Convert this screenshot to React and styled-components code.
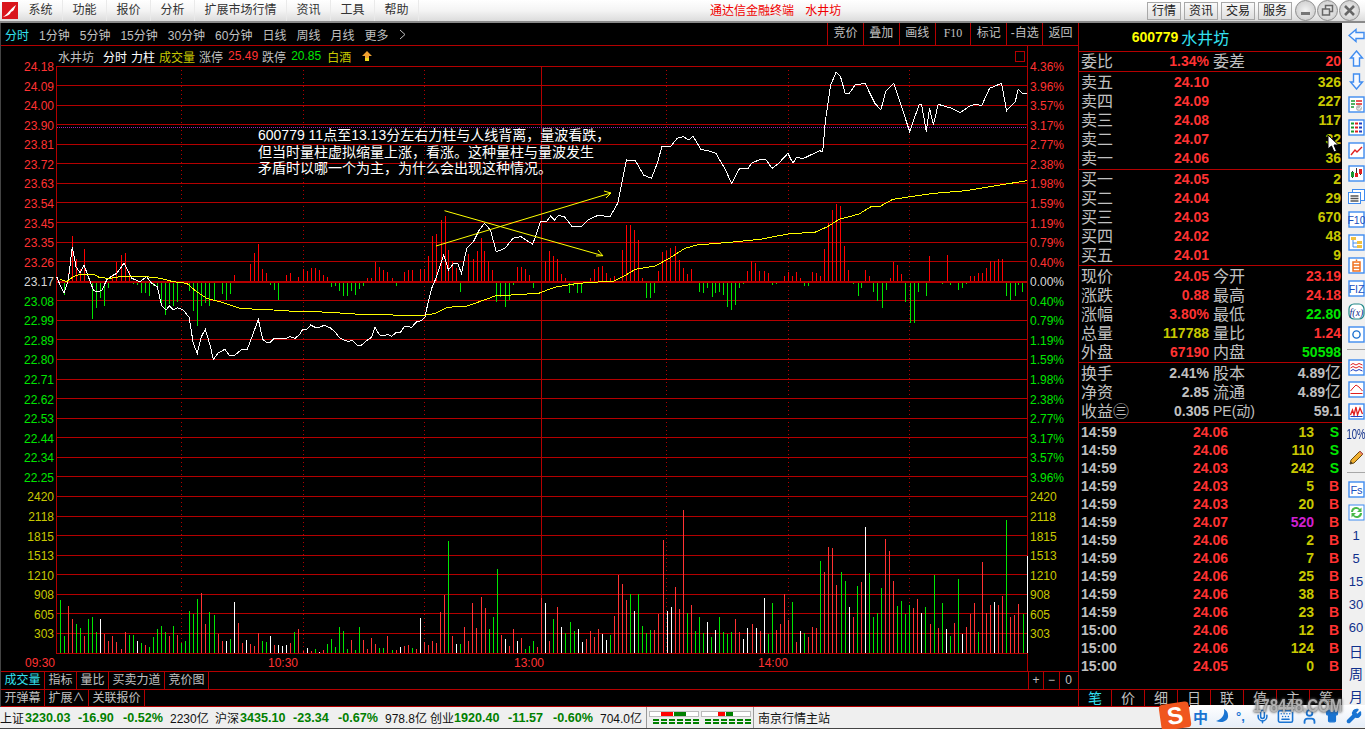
import styled, { createGlobalStyle } from "styled-components";
import { Mic, Keyboard, Wrench, Shirt, User } from "lucide-react";

const LINE = "#b40000";
const RED = "#ff3232";
const GREEN = "#00e600";
const YELLOW = "#c8c800";
const GRAY = "#c0c0c0";
const CYAN = "#33e0f0";

const GlobalStyle = createGlobalStyle`
  html, body {
    margin: 0;
    padding: 0;
    background: #000;
    overflow: hidden;
  }
  * {
    box-sizing: border-box;
  }
`;

const Page = styled.div`
  position: relative;
  width: 1365px;
  height: 729px;
  display: flex;
  flex-direction: column;
  overflow: hidden;
  font-family: "Liberation Sans", "Noto Sans CJK SC", sans-serif;
  font-size: 12px;
  color: ${GRAY};
  background: #000;
`;

/* title bar */
const TitleBar = styled.div`
  height: 23px;
  flex: none;
  display: flex;
  align-items: center;
  padding-left: 2px;
  color: #333;
  background: linear-gradient(#ffffff, #f4f4f4 50%, #dcdcdc);
  border-bottom: 2px solid #8a8a8a;
`;
const Logo = styled.svg`
  width: 16px;
  height: 17px;
  flex: none;
  margin-right: 1px;
`;
const Menu = styled.div`
  padding: 0 9.5px;
  height: 21px;
  line-height: 21px;
  white-space: nowrap;
  border-right: 1px solid #eaeaea;
`;
const AppTitle = styled.div`
  position: absolute;
  left: 710px;
  top: 3px;
  line-height: 17px;
  color: #f00000;
  word-spacing: 8px;
  white-space: nowrap;
`;
const TitleRight = styled.div`
  margin-left: auto;
  display: flex;
  align-items: center;
  padding-right: 5px;
`;
const TitleButton = styled.div`
  width: 34px;
  height: 18px;
  line-height: 17px;
  margin-right: 3px;
  text-align: center;
  color: #222;
  background: linear-gradient(#fafafa, #dedede);
  border: 1px solid #a8a8a8;
`;
const WindowButton = styled.div`
  width: 21px;
  height: 21px;
  margin-left: ${(p) => p.$gap ?? 1}px;
  display: flex;
  align-items: center;
  justify-content: center;
  border-radius: 50%;
  background: radial-gradient(#f4f4f4, #c4c4c4);
  border: 1px solid #8c8c8c;
`;

/* body */
const Body = styled.div`
  flex: none;
  height: 684px;
  display: flex;
`;
const Main = styled.div`
  width: 1079px;
  flex: none;
  display: flex;
  flex-direction: column;
  border-left: 1px solid #444;
  border-right: 1px solid ${LINE};
`;
const TopRow = styled.div`
  height: 23px;
  flex: none;
  display: flex;
  align-items: center;
  padding-left: 4px;
  border-bottom: 1px solid ${LINE};
`;
const Period = styled.span`
  margin-right: ${(p) => p.$gap || 10}px;
  color: ${(p) => p.color || GRAY};
  white-space: nowrap;
`;
const TopButtons = styled.div`
  margin-left: auto;
  height: 100%;
  display: flex;
`;
const TopButton = styled.div`
  width: 35.86px;
  text-align: center;
  line-height: 21px;
  white-space: nowrap;
  border-left: 1px solid ${LINE};
  font-family: ${(p) => (p.$serif ? '"Liberation Serif", serif' : "inherit")};
`;
const ChartHeader = styled.div`
  height: 20px;
  width: 972px;
  flex: none;
  margin-left: 55px;
  padding-left: 2px;
  padding-right: 2px;
  display: flex;
  align-items: center;
  white-space: nowrap;
  border-right: 1px solid ${LINE};
`;
const HeaderText = styled.span`
  margin-right: ${(p) => p.$gap ?? 4}px;
  color: ${(p) => p.color || GRAY};
`;
const SmallBox = styled.div`
  width: 10px;
  height: 11px;
  margin-left: auto;
  border: 1px solid ${LINE};
`;
const ChartRow = styled.div`
  height: 588px;
  flex: none;
  display: flex;
`;
const Axis = styled.div`
  flex: none;
  width: ${(p) => p.$width}px;
  margin-top: -8px;
  padding: ${(p) => (p.$right ? "0 0 0 2px" : "0 2px 0 0")};
  text-align: ${(p) => (p.$right ? "left" : "right")};
`;
const AxisLabel = styled.div`
  height: 19.57px;
  line-height: 19.57px;
  color: ${(p) => p.color};
`;
const Plot = styled.div`
  position: relative;
  width: 972px;
  height: 588px;
  flex: none;
`;
const PlotSvg = styled.svg`
  display: block;
  width: 972px;
  height: 588px;
`;
const Note = styled.div`
  position: absolute;
  left: 202px;
  top: 61px;
  font-size: 14px;
  line-height: 16.5px;
  color: #fff;
  white-space: nowrap;
`;
const TimeRow = styled.div`
  height: 18px;
  flex: none;
  display: flex;
  border-bottom: 1px solid ${LINE};
`;
const TimeLabels = styled.div`
  width: 1027px;
  flex: none;
  display: grid;
  grid-template-columns: 243px 246px 244px 1fr;
  padding-left: 24px;
  line-height: 18px;
  color: ${RED};
  border-right: 1px solid ${LINE};
`;
const TabRow = styled.div`
  height: ${(p) => p.$height}px;
  flex: none;
  display: flex;
  border-bottom: 1px solid ${LINE};
`;
const Tab = styled.div`
  width: ${(p) => p.$width}px;
  flex: none;
  text-align: center;
  line-height: 16px;
  white-space: nowrap;
  color: ${(p) => (p.$active ? CYAN : GRAY)};
  border-right: 1px solid ${LINE};
  margin-left: ${(p) => p.$push || 0}px;
`;
const ZoomButton = styled(Tab)`
  border-left: ${(p) => (p.$first ? `1px solid ${LINE}` : "none")};
  border-right: ${(p) => (p.$last ? "none" : `1px solid ${LINE}`)};
`;

/* quote panel */
const Panel = styled.div`
  width: 263px;
  flex: none;
  display: flex;
  flex-direction: column;
`;
const PanelTitle = styled.div`
  height: 29px;
  flex: none;
  display: flex;
  align-items: center;
  justify-content: center;
  padding-right: 60px;
  font-size: 14px;
  font-weight: 700;
  color: #ffff00;
  border-bottom: 1px solid ${LINE};
`;
const StockName = styled.span`
  margin-left: 3px;
  font-size: 16px;
  font-weight: 400;
  color: ${CYAN};
`;
const Group = styled.div`
  flex: none;
  padding-top: ${(p) => p.$top || 0}px;
  padding-bottom: ${(p) => p.$pad || 0}px;
  border-bottom: 1px solid ${LINE};
`;
const QuoteRow = styled.div`
  height: ${(p) => p.$height || 19}px;
  display: grid;
  grid-template-columns: 32px 96px 4px 32px 96px;
  padding-left: 2px;
  align-items: center;
  line-height: ${(p) => p.$height || 19}px;
`;
const Name = styled.span`
  font-size: ${(p) => p.$size || 16}px;
  color: ${GRAY};
  white-space: nowrap;
`;
const Num = styled.span`
  grid-column: ${(p) => p.$col || "auto"};
  text-align: right;
  font-size: 14px;
  font-weight: 700;
  white-space: nowrap;
  color: ${(p) => p.color || GRAY};
`;
const Unit = styled.span`
  font-size: 16px;
  font-weight: 400;
`;
const TickRow = styled.div`
  height: 18px;
  display: grid;
  grid-template-columns: 38px 109px 86px 25px;
  padding-left: 2px;
  line-height: 18px;
  font-size: 14px;
  font-weight: 700;
`;
const TickCell = styled.span`
  text-align: ${(p) => (p.$left ? "left" : "right")};
  color: ${(p) => p.color || GRAY};
`;
const PanelTabs = styled.div`
  margin-top: auto;
  height: 18px;
  flex: none;
  display: grid;
  grid-template-columns: repeat(8, 33px);
  border-top: 1px solid ${LINE};
  border-bottom: 1px solid ${LINE};
`;
const PanelTab = styled.div`
  text-align: center;
  font-size: 14px;
  line-height: 16px;
  color: ${(p) => (p.$active ? CYAN : GRAY)};
  border-right: 1px solid ${LINE};
`;

/* right tool strip */
const Tools = styled.div`
  flex: 1;
  display: flex;
  flex-direction: column;
  align-items: center;
  padding-top: 1px;
  background: #f0f0f0;
  color: #10308c;
`;
const ToolSlot = styled.div`
  height: ${(p) => p.$height || 23}px;
  flex: none;
  display: flex;
  align-items: center;
  justify-content: center;
  font-size: ${(p) => p.$size || 13}px;
`;
const ToolSvg = styled.svg`
  width: 17px;
  height: 17px;
  display: block;
`;
const Percent = styled.span`
  display: block;
  font-size: 14px;
  transform: scaleX(0.68);
  white-space: nowrap;
`;
const Divider = styled.div`
  width: 19px;
  height: 1px;
  flex: none;
  margin: ${(p) => p.$margin};
  background: #a8a8a8;
`;

/* status bar */
const StatusBar = styled.div`
  height: 22px;
  flex: none;
  display: flex;
  align-items: center;
  color: #111;
  background: #efefef;
  border-bottom: 1px solid #444;
  white-space: nowrap;
`;
const Index = styled.span`
  width: ${(p) => p.$width}px;
  flex: none;
`;
const Green = styled.span`
  flex: none;
  width: ${(p) => p.$width}px;
  font-size: 12.6px;
  font-weight: 700;
  color: #008000;
`;
const Mini = styled.div`
  width: 108px;
  height: 100%;
  flex: none;
  margin-left: 2px;
  padding: 4px 2px 0;
  display: flex;
  gap: 2px;
  border-left: 1px solid #999;
  border-right: 1px solid #999;
`;
const MiniGroup = styled.div`
  width: 50px;
`;
const MiniTrack = styled.div`
  height: 6px;
  display: flex;
  justify-content: center;
  background: #fff;
  border: 1px solid #bbb;
`;
const MiniPart = styled.div`
  height: 100%;
  margin-right: 1px;
  background: ${(p) => p.color};
`;
const MiniDash = styled.div`
  height: 5px;
  margin: 2px 0 0 4px;
  border-top: 2px solid #008000;
  border-bottom: 2px solid #008000;
  mask-image: repeating-linear-gradient(90deg, #000 0 6px, transparent 6px 8px);
`;
const Station = styled.span`
  margin-left: 4px;
`;

/* things lying over the page */
const Ime = styled.div`
  position: absolute;
  right: 0;
  bottom: 2px;
  width: 175px;
  height: 22px;
  padding-left: 3px;
  display: flex;
  align-items: center;
  gap: 7px;
  background: linear-gradient(#ffffff, #e6eef8);
  color: #1a74d2;
`;
const ImeLogo = styled.div`
  position: absolute;
  right: 175px;
  bottom: 0;
  width: 30px;
  height: 26px;
  transform: rotate(-8deg);
  border-radius: 4px;
  background: #f0561e;
  color: #fff;
  font: 700 24px/26px "Liberation Sans", sans-serif;
  text-align: center;
`;
const ImeZh = styled.span`
  font-size: 15px;
  font-weight: 700;
`;
const ImeMark = styled.span`
  font-size: 13px;
  font-weight: 700;
  width: 12px;
`;
const Watermark = styled.div`
  position: absolute;
  left: 1253px;
  top: 695px;
  font-size: 15px;
  font-weight: 700;
  line-height: 18px;
  color: rgba(205, 205, 205, 0.75);
  text-shadow: 0 0 3px #555, 0 0 2px #555;
  transform: scaleY(1.2);
  transform-origin: top left;
  white-space: nowrap;
`;
const Cursor = styled.svg`
  position: absolute;
  left: 1327px;
  top: 134px;
  width: 13px;
  height: 19px;
`;

const gridY = (i) => Math.floor(66 + 19.57 * i) + 0.5;
const barX = (i) => Math.floor(60.33 + i * 4.045);
const redL = "24.18 24.09 24.00 23.90 23.81 23.72 23.63 23.54 23.45 23.35 23.26".split(" ");
const greenL = "23.08 22.99 22.89 22.80 22.71 22.62 22.53 22.44 22.34 22.25".split(" ");
const redR = "4.36 3.96 3.57 3.17 2.77 2.38 1.98 1.59 1.19 0.79 0.40".split(" ");
const greenR = "0.40 0.79 1.19 1.59 1.98 2.38 2.77 3.17 3.57 3.96".split(" ");
const vols = "2420 2118 1815 1513 1210 908 605 303".split(" ");

// volume bars: colour + pixel height, left half then right half of the chart
const VOL = (
  "g53 g17 r47 r34 g29 g25 r17 g34 g36 g21 w34 r19 r12 r17 r11 r4 r21 g18 g18 w12 g10 r8 g6 g16 g24 g27 g21 r17 g27 r18 g10 g12 g42 g39 g54 r60 r29 g41 g38 r19 r12 w12 g14 w51 r30 r10 w13 r9 r7 r20 g12 g11 w17 r8 w8 w7 w8 r10 g21 r24 r2 w5 r2 g4 w1 r3 g9 g14 g6 g26 g22 g4 r13 g3 g26 r13 r4 r15 r9 g5 g5 r17 g3 r3 w6 r7 r8 g5 r4 w35 r11 r8 r12 r10 r41 r58 g112 r17 w9 g9 r26 r12 r50 r25 r56 r45 g24 g36 g84 r18 w14 r7 r24 w12 " +
  "r15 g4 g7 g12 r6 r55 w50 r12 g34 r46 w26 g20 g31 g22 w24 w11 r14 r22 r16 r24 w19 w13 g18 r37 r78 r69 r53 g59 w42 g59 g27 g20 g23 r23 r39 r113 w42 w46 r66 r44 r143 g40 r48 g22 g36 g20 w31 g16 w23 g36 g21 g19 g21 r34 r21 w14 w25 r29 w25 r22 w55 g19 g50 r23 r29 r59 r33 g51 r11 w22 g20 r16 r26 r25 g92 r81 r106 r105 r68 g81 g72 w46 r36 g67 r71 w126 g80 g36 g40 g65 r114 r102 r72 g47 g52 g39 g48 r45 r54 w40 g46 r29 g78 r25 g50 w24 g17 r30 g74 w19 r26 r39 r50 g21 r91 r40 r48 w51 r48 r57 g133 r36 r38 r49 g39 w97"
).split(" ");
const VOL_COLOR = { r: RED, g: GREEN, w: "#ffffff" };

// force bars left of x=420: one value per minute, red above zero and green below
const FORCE_A = [0, -12, 8, 45, 22, 12, 32, 0, -36, -25, -15, -23, -5, 6, 19, 26, 28, 10, -1, -2, -10, -10, -13, -3, -5, -20, -32, -21, -23, -19, 0, -1, -8, -28, -43, -23, -20, -23, -17, 0, -11, -17, -11, 6, 0, 0, 0, 17, 28, 37, 12, 8, -2, -7, -17, 0, 6, 8, 0, 4, 12, 10, 13, 13, 11, 6, 4, -4, -3, -8, -13, -13, -8, -12, -6, -3, 3, 3, 19, 14, 11, 9, 3, -3, 0, 9, 11, 11];
// right of x=420: [crop x, value] read from the zoomed chart
const FORCE_B = [[0,12],[10,12],[21,25],[31,45],[41,47],[52,61],[62,65],[72,31],[82,20],[92,13],[102,-9],[122,27],[133,22],[143,30],[153,43],[163,30],[173,20],[183,11],[193,-19],[203,-14],[214,-24],[224,-17],[235,-2],[245,14],[255,14],[266,12],[276,6],[286,-5],[316,20],[326,30],[337,25],[347,22],[357,7],[367,3],[377,-10],[387,-3],[397,-10],[407,-10],[431,3],[441,12],[451,14],[461,15],[471,8],[481,3],[491,5],[511,31],[521,56],[531,56],[541,51],[551,41],[561,3],[572,-15],[582,-15],[592,-10],[602,10],[612,29],[622,30],[632,33],[645,35],[655,21],[665,13],[675,7],[685,12],[706,-9],[716,-10],[726,-5],[737,-14],[747,-10],[757,-9],[767,-12],[777,-24],[787,-27],[797,-22],[807,-5],[817,-1],[827,10],[837,20],[848,18],[858,10],[870,10],[880,8],[890,-2],[900,-1],[921,5],[931,9],[941,5],[951,9],[961,3],[971,-3],[981,-3],[991,9],[1001,8],[1012,5],[1022,32],[1032,58],[1042,71],[1052,77],[1062,75],[1073,35],[1083,11],[1095,-1],[1106,-13],[1116,-5],[1126,11],[1136,5],[1146,-9],[1156,-18],[1167,-25],[1177,-7],[1187,3],[1197,19],[1207,16],[1217,7],[1227,-19],[1238,-40],[1248,-40],[1258,-9],[1278,-13],[1288,25],[1320,-1],[1331,26],[1341,-2],[1361,-7],[1371,-5],[1381,-1],[1391,5],[1401,5],[1411,8],[1421,8],[1431,13],[1442,20],[1452,20],[1462,22],[1472,22],[1482,-13],[1492,-17],[1503,-13],[1513,-2],[1523,-9]];

const mapA = ([x, y]) => [40 + x / 3, 230 + y / 3];
const mapB = ([x, y]) => [420 + x / 2.528, 60 + y / 3];
const toPoints = (list) => list.map((p) => `${p[0].toFixed(1)},${p[1].toFixed(1)}`).join(" ");

const PRICE = toPoints([
  ...[[50,140],[60,165],[72,190],[85,150],[97,50],[108,110],[120,128],[132,105],[145,140],[160,180],[170,185],[185,182],[200,150],[215,138],[230,130],[252,100],[265,125],[275,145],[300,155],[320,140],[335,160],[352,170],[365,228],[378,240],[388,228],[400,240],[412,233],[430,240],[447,262],[460,340],[472,370],[484,320],[496,298],[510,345],[520,388],[535,368],[555,358],[568,376],[585,375],[605,358],[622,358],[640,310],[655,268],[668,328],[680,338],[690,338],[702,325],[740,325],[750,320],[765,325],[778,315],[788,298],[800,298],[812,285],[825,292],[840,291],[853,286],[870,293],[885,305],[900,325],[925,335],[935,330],[955,348],[965,345],[985,328],[995,322],[1005,292],[1018,314],[1030,318],[1042,313],[1055,319],[1068,308],[1080,308],[1095,288],[1115,292],[1130,275],[1145,272],[1155,260],[1165,215],[1175,175],[1188,145]].map(mapA),
  ...[[50,620],[60,585],[72,630],[85,610],[95,610],[105,640],[118,565],[135,545],[150,510],[163,490],[178,510],[193,575],[215,565],[235,535],[255,530],[285,553],[305,485],[320,485],[330,468],[340,480],[350,466],[365,470],[385,500],[408,500],[425,480],[450,466],[480,470],[500,430],[510,370],[522,300],[545,303],[565,345],[585,355],[600,310],[612,258],[635,258],[650,235],[665,230],[680,240],[690,228],[710,268],[730,273],[748,280],[770,325],[788,370],[808,325],[830,325],[838,310],[860,298],[875,300],[890,325],[905,312],[930,280],[943,310],[952,292],[968,296],[1010,272],[1018,275],[1025,180],[1038,75],[1052,37],[1063,50],[1075,100],[1085,100],[1100,75],[1115,72],[1125,70],[1150,130],[1165,150],[1178,92],[1198,70],[1238,215],[1262,133],[1268,133],[1280,215],[1288,145],[1298,195],[1310,133],[1330,140],[1345,145],[1365,158],[1390,138],[1405,133],[1420,137],[1440,85],[1470,70],[1483,152],[1505,125],[1512,88],[1522,100],[1534,100]].map(mapB),
]);
const AVERAGE = toPoints([
  ...[[60,148],[80,155],[100,140],[120,133],[160,133],[180,143],[210,145],[240,140],[320,140],[360,145],[400,155],[440,160],[470,185],[500,205],[540,215],[600,235],[650,238],[700,240],[760,244],[830,245],[900,249],[960,253],[1030,253],[1090,257],[1140,257]].map(mapA),
  ...[[0,768],[40,760],[70,742],[120,738],[190,708],[300,700],[340,682],[400,670],[490,663],[520,645],[545,628],[595,618],[630,595],[670,565],[700,555],[800,545],[860,538],[930,522],[1000,516],[1030,500],[1060,478],[1110,462],[1140,440],[1165,438],[1195,418],[1240,410],[1300,400],[1380,392],[1440,380],[1534,362]].map(mapB),
]);

const MENU = ["系统", "功能", "报价", "分析", "扩展市场行情", "资讯", "工具", "帮助"];
const PERIODS = ["1分钟", "5分钟", "15分钟", "30分钟", "60分钟", "日线", "周线", "月线", "更多"];
const SELL = [["卖五", "24.10", "326"], ["卖四", "24.09", "227"], ["卖三", "24.08", "117"], ["卖二", "24.07", "32"], ["卖一", "24.06", "36"]];
const BUY = [["买一", "24.05", "2"], ["买二", "24.04", "29"], ["买三", "24.03", "670"], ["买四", "24.02", "48"], ["买五", "24.01", "9"]];
const STATS = [
  ["现价", "24.05", RED, "今开", "23.19", RED],
  ["涨跌", "0.88", RED, "最高", "24.18", RED],
  ["涨幅", "3.80%", RED, "最低", "22.80", GREEN],
  ["总量", "117788", YELLOW, "量比", "1.24", RED],
  ["外盘", "67190", RED, "内盘", "50598", GREEN],
];
const TICKS = [
  ["14:59", "24.06", "13", "S"], ["14:59", "24.06", "110", "S"], ["14:59", "24.03", "242", "S"], ["14:59", "24.03", "5", "B"],
  ["14:59", "24.03", "20", "B"], ["14:59", "24.07", "520", "B"], ["14:59", "24.06", "2", "B"], ["14:59", "24.06", "7", "B"],
  ["14:59", "24.06", "25", "B"], ["14:59", "24.06", "38", "B"], ["14:59", "24.06", "23", "B"], ["15:00", "24.06", "12", "B"],
  ["15:00", "24.06", "124", "B"], ["15:00", "24.05", "0", "B"],
];
const BLUE = "#3f8cf0";

function Box({ children }) {
  return (
    <ToolSvg viewBox="0 0 17 17">
      <rect x="1" y="1" width="15" height="15" fill="#fff" stroke={BLUE} strokeWidth="1.4" />
      {children}
    </ToolSvg>
  );
}

function Chart() {
  return (
    <PlotSvg viewBox="56 66 972 588" shapeRendering="crispEdges">
      {Array.from({ length: 31 }, (_, i) => (
        <line key={i} x1="57" x2="1027" y1={gridY(i)} y2={gridY(i)} stroke={LINE} />
      ))}
      <line x1="56.5" x2="56.5" y1="66" y2="654" stroke={LINE} />
      <line x1="1027.5" x2="1027.5" y1="66" y2="654" stroke={LINE} />
      <line x1="541.5" x2="541.5" y1="66" y2="654" stroke={LINE} />
      {[181, 303, 424, 666, 788, 909].map((x) => (
        <line key={x} x1={x + 0.5} x2={x + 0.5} y1="66" y2="654" stroke={LINE} strokeDasharray="1 3" />
      ))}
      <line x1="57" x2="1027" y1="127.5" y2="127.5" stroke="#a020b0" strokeDasharray="1 1" />
      <rect x="57" y="281" width="970" height="2" fill="#b80000" />
      {FORCE_A.map((v, i) =>
        v ? (
          <rect key={i} x={barX(i)} y={v > 0 ? 281 - v : 283} width="1" height={Math.abs(v)} fill={v > 0 ? "#ff0000" : GREEN} />
        ) : null
      )}
      {FORCE_B.map(([z, v]) => (
        <rect key={z} x={Math.round(420 + z / 2.528)} y={v > 0 ? 281 - v : 283} width="1" height={Math.abs(v)} fill={v > 0 ? "#ff0000" : GREEN} />
      ))}
      {VOL.map((bar, i) => {
        const h = Number(bar.slice(1));
        return <rect key={i} x={barX(i)} y={653 - h} width="1" height={h} fill={VOL_COLOR[bar[0]]} />;
      })}
      <polyline points={PRICE} fill="none" stroke="#fff" />
      <polyline points={AVERAGE} fill="none" stroke="#ffff00" />
      <g fill="none" stroke="#ffff00" shapeRendering="auto">
        <path d="M436 246 L611 193 M604 191 L611 193 L606 198" />
        <path d="M444.5 210.7 L602.8 255.7 M598 250 L602.8 255.7 L596 256" />
      </g>
    </PlotSvg>
  );
}

export default function App() {
  return (
    <Page>
      <GlobalStyle />
      <TitleBar>
        <Logo viewBox="0 0 16 17">
          <rect width="16" height="17" fill="#d9161c" />
          <path d="M1 15 C6 12 7 8 14 3 C12 7 12 9 9 10 C8 13 5 14 1 15 Z" fill="#fff" />
        </Logo>
        {MENU.map((m) => (
          <Menu key={m}>{m}</Menu>
        ))}
        <AppTitle>通达信金融终端 水井坊</AppTitle>
        <TitleRight>
          {["行情", "资讯", "交易", "服务"].map((t) => (
            <TitleButton key={t}>{t}</TitleButton>
          ))}
          <WindowButton $gap={0}>
            <svg width="13" height="13" viewBox="0 0 13 13">
              <rect x="2" y="8" width="9" height="3" fill="#777" />
            </svg>
          </WindowButton>
          <WindowButton>
            <svg width="13" height="13" viewBox="0 0 13 13" fill="none" stroke="#666" strokeWidth="1.5">
              <rect x="4.5" y="1.5" width="7" height="6" />
              <rect x="1.5" y="5" width="7" height="6" fill="#ddd" />
            </svg>
          </WindowButton>
          <WindowButton>
            <svg width="13" height="13" viewBox="0 0 13 13" stroke="#666" strokeWidth="2.6">
              <path d="M2 2 L11 11 M11 2 L2 11" />
            </svg>
          </WindowButton>
        </TitleRight>
      </TitleBar>

      <Body>
        <Main>
          <TopRow>
            <Period color={CYAN}>分时</Period>
            {PERIODS.map((p) => (
              <Period key={p}>{p}</Period>
            ))}
            <svg width="7" height="11" viewBox="0 0 7 11" fill="none" stroke={GRAY}>
              <path d="M1 1 L6 5.5 L1 10" />
            </svg>
            <TopButtons>
              {["竞价", "叠加", "画线", "F10", "标记", "-自选", "返回"].map((b) => (
                <TopButton key={b} $serif={b === "F10"}>
                  {b}
                </TopButton>
              ))}
            </TopButtons>
          </TopRow>
          <ChartHeader>
            <HeaderText $gap={9}>水井坊</HeaderText>
            <HeaderText color="#fff">分时</HeaderText>
            <HeaderText color="#fff">力柱</HeaderText>
            <HeaderText color={YELLOW}>成交量</HeaderText>
            <HeaderText $gap={5}>涨停</HeaderText>
            <HeaderText color={RED}>25.49</HeaderText>
            <HeaderText $gap={5}>跌停</HeaderText>
            <HeaderText color={GREEN} $gap={6}>20.85</HeaderText>
            <HeaderText color={YELLOW} $gap={11}>白酒</HeaderText>
            <svg width="10" height="11" viewBox="0 0 10 11">
              <path d="M5 0 L10 5 H7 V7 H3 V5 H0 Z" fill="#f0a030" />
              <rect x="3" y="7" width="4" height="3" fill="#e8d820" />
            </svg>
            <SmallBox />
          </ChartHeader>
          <ChartRow>
            <Axis $width={55}>
              {redL.map((l) => (
                <AxisLabel key={l} color={RED}>{l}</AxisLabel>
              ))}
              <AxisLabel color="#d8d8d8">23.17</AxisLabel>
              {greenL.map((l) => (
                <AxisLabel key={l} color={GREEN}>{l}</AxisLabel>
              ))}
              {vols.map((l) => (
                <AxisLabel key={l} color={YELLOW}>{l}</AxisLabel>
              ))}
            </Axis>
            <Plot>
              <Chart />
              <Note>
                600779 11点至13.13分左右力柱与人线背离，量波看跌，
                <br />
                但当时量柱虚拟缩量上涨，看涨。这种量柱与量波发生
                <br />
                矛盾时以哪一个为主，为什么会出现这种情况。
              </Note>
            </Plot>
            <Axis $width={50} $right>
              {redR.map((l) => (
                <AxisLabel key={l} color={RED}>{l}%</AxisLabel>
              ))}
              <AxisLabel color="#d8d8d8">0.00%</AxisLabel>
              {greenR.map((l) => (
                <AxisLabel key={l} color={GREEN}>{l}%</AxisLabel>
              ))}
              {vols.map((l) => (
                <AxisLabel key={l} color={YELLOW}>{l}</AxisLabel>
              ))}
            </Axis>
          </ChartRow>
          <TimeRow>
            <TimeLabels>
              <span>09:30</span>
              <span>10:30</span>
              <span>13:00</span>
              <span>14:00</span>
            </TimeLabels>
          </TimeRow>
          <TabRow $height={18}>
            <Tab $width={44} $active>成交量</Tab>
            <Tab $width={32}>指标</Tab>
            <Tab $width={32}>量比</Tab>
            <Tab $width={56}>买卖力道</Tab>
            <Tab $width={44}>竞价图</Tab>
            <ZoomButton $width={16} $push={819} $first>+</ZoomButton>
            <ZoomButton $width={16}>−</ZoomButton>
            <ZoomButton $width={17} $last>0</ZoomButton>
          </TabRow>
          <TabRow $height={17}>
            <Tab $width={44}>开弹幕</Tab>
            <Tab $width={44}>扩展∧</Tab>
            <Tab $width={56}>关联报价</Tab>
          </TabRow>
        </Main>

        <Panel>
          <PanelTitle>
            600779
            <StockName>水井坊</StockName>
          </PanelTitle>
          <Group>
            <QuoteRow>
              <Name>委比</Name>
              <Num color={RED}>1.34%</Num>
              <span />
              <Name>委差</Name>
              <Num color={RED}>20</Num>
            </QuoteRow>
          </Group>
          <Group $top={1} $pad={1}>
            {SELL.map(([n, p, v]) => (
              <QuoteRow key={n}>
                <Name>{n}</Name>
                <Num color={RED}>{p}</Num>
                <Num $col="5" color={YELLOW}>{v}</Num>
              </QuoteRow>
            ))}
          </Group>
          <Group>
            {BUY.map(([n, p, v]) => (
              <QuoteRow key={n}>
                <Name>{n}</Name>
                <Num color={RED}>{p}</Num>
                <Num $col="5" color={YELLOW}>{v}</Num>
              </QuoteRow>
            ))}
          </Group>
          <Group $top={1}>
            {STATS.map(([a, av, ac, b, bv, bc]) => (
              <QuoteRow key={a}>
                <Name>{a}</Name>
                <Num color={ac}>{av}</Num>
                <span />
                <Name>{b}</Name>
                <Num color={bc}>{bv}</Num>
              </QuoteRow>
            ))}
          </Group>
          <Group $pad={1}>
            <QuoteRow $height={19.3}>
              <Name>换手</Name>
              <Num>2.41%</Num>
              <span />
              <Name>股本</Name>
              <Num>4.89<Unit>亿</Unit></Num>
            </QuoteRow>
            <QuoteRow $height={19.3}>
              <Name>净资</Name>
              <Num>2.85</Num>
              <span />
              <Name>流通</Name>
              <Num>4.89<Unit>亿</Unit></Num>
            </QuoteRow>
            <QuoteRow $height={19.3}>
              <Name>收益㊂</Name>
              <Num>0.305</Num>
              <span />
              <Name $size={14}>PE(动)</Name>
              <Num>59.1</Num>
            </QuoteRow>
          </Group>
          {TICKS.map(([t, p, v, f], i) => (
            <TickRow key={i}>
              <TickCell $left>{t}</TickCell>
              <TickCell color={RED}>{p}</TickCell>
              <TickCell color={v === "520" ? "#d020d0" : YELLOW}>{v}</TickCell>
              <TickCell color={f === "S" ? GREEN : RED}>{f}</TickCell>
            </TickRow>
          ))}
          <PanelTabs>
            {["笔", "价", "细", "日", "联", "值", "主", "筹"].map((t, i) => (
              <PanelTab key={t} $active={i === 0}>{t}</PanelTab>
            ))}
          </PanelTabs>
        </Panel>

        <Tools>
          <ToolSlot>
            <svg width="17" height="15" viewBox="0 0 17 15" fill="#f4f8ff" stroke={BLUE} strokeWidth="1.4">
              <path d="M1 7.5 L8 1.5 V4.5 H16 V10.5 H8 V13.5 Z" />
            </svg>
          </ToolSlot>
          <ToolSlot>
            <svg width="15" height="17" viewBox="0 0 15 17" fill="#f4f8ff" stroke={BLUE} strokeWidth="1.4">
              <path d="M7.5 1 L13.5 8 H10.5 V16 H4.5 V8 H1.5 Z" />
            </svg>
          </ToolSlot>
          <ToolSlot>
            <svg width="15" height="17" viewBox="0 0 15 17" fill="#f4f8ff" stroke={BLUE} strokeWidth="1.4">
              <path d="M7.5 16 L13.5 9 H10.5 V1 H4.5 V9 H1.5 Z" />
            </svg>
          </ToolSlot>
          <ToolSlot>
            <Box>
              <path d="M3 5 H7 M3 8 H7 M3 11 H6" stroke="#1a9a30" strokeWidth="1.5" />
              <path d="M8 5 H14 M8 8 H14" stroke="#e02020" strokeWidth="1.5" />
              <circle cx="11" cy="12" r="3" fill="#bbb" />
              <path d="M9.5 12 L11 13.5 L13.5 10" stroke="#fff" fill="none" />
            </Box>
          </ToolSlot>
          <ToolSlot>
            <Box>
              <path d="M3 4.5 H6 M3 8.5 H6 M3 12.5 H6" stroke="#1a9a30" strokeWidth="2" />
              <path d="M7 4.5 H10 M7 8.5 H10 M7 12.5 H10" stroke="#e02020" strokeWidth="2" />
              <path d="M11 4.5 H14 M11 8.5 H14 M11 12.5 H14" stroke="#2040c0" strokeWidth="2" />
            </Box>
          </ToolSlot>
          <ToolSlot>
            <Box>
              <path d="M3 13 L7 8 L9 10 L14 5" stroke="#e02020" strokeWidth="1.4" fill="none" />
            </Box>
          </ToolSlot>
          <ToolSlot>
            <Box>
              <path d="M4.5 6 V13 M8.5 3 V11 M12.5 4 V10" stroke="#333" />
              <rect x="3" y="7" width="3" height="5" fill="#1a9a30" />
              <rect x="7" y="8" width="3" height="4" fill="#e02020" />
              <rect x="11" y="4" width="3" height="5" fill="#e02020" />
            </Box>
          </ToolSlot>
          <ToolSlot>
            <ToolSvg viewBox="0 0 17 17">
              <rect x="4.5" y="1.5" width="12" height="11" fill="#fff" stroke={BLUE} />
              <rect x="0.5" y="4.5" width="12" height="11" fill="#fff" stroke={BLUE} />
              <path d="M2.5 8 H10.5 M2.5 10.5 H10.5 M2.5 13 H10.5" stroke="#555" strokeWidth="1.3" />
            </ToolSvg>
          </ToolSlot>
          <ToolSlot>
            <Box>
              <text x="8.5" y="13" fontSize="10.5" fontFamily="Liberation Sans" textAnchor="middle" fill="#1a50c0">F10</text>
            </Box>
          </ToolSlot>
          <ToolSlot>
            <Box>
              <path d="M5 5 V13 H9 M5 9 H9" stroke={BLUE} fill="none" />
              <rect x="3" y="3" width="5" height="3" fill="#f0c040" />
              <rect x="9" y="7" width="5" height="3" fill="#f0c040" />
              <rect x="9" y="11" width="5" height="3" fill="#f0c040" />
            </Box>
          </ToolSlot>
          <ToolSlot>
            <Box>
              <path d="M8.5 2.5 V4 M5 5 H12 V14 H5 Z M5 8 H12 M5 11 H12" stroke="#f07020" strokeWidth="1.5" fill="none" />
            </Box>
          </ToolSlot>
          <ToolSlot>
            <Box>
              <text x="8.5" y="13" fontSize="10.5" fontFamily="Liberation Sans" textAnchor="middle" fill="#1a50c0">FIZ</text>
            </Box>
          </ToolSlot>
          <ToolSlot>
            <ToolSvg viewBox="0 0 17 17">
              <rect x="1" y="1" width="15" height="15" rx="5" fill="#fff" stroke="#208888" strokeWidth="1.2" />
              <text x="8.5" y="12.5" fontSize="10" fontFamily="Liberation Serif" fontStyle="italic" textAnchor="middle" fill="#10308c">f(x)</text>
            </ToolSvg>
          </ToolSlot>
          <ToolSlot>
            <Box>
              <circle cx="8.5" cy="8.5" r="3.6" fill="none" stroke="#1a70d0" strokeWidth="1.4" />
            </Box>
          </ToolSlot>
          <Divider $margin="3px 0 6px" />
          <ToolSlot $height={22}>
            <Box>
              <path d="M2.5 6 L5 4.5 L8 6 L11 4.5 L14.5 6 M2.5 9 L5 7.5 L8 9 L11 7.5 L14.5 9" stroke="#e02020" fill="none" />
              <path d="M2.5 12 L5 10.5 L8 12 L11 10.5 L14.5 12" stroke="#2040c0" fill="none" />
            </Box>
          </ToolSlot>
          <ToolSlot $height={22}>
            <Box>
              <path d="M2.5 10 L5 7 L8 4 L11 6 L14.5 10 M2.5 12.5 H14.5" stroke="#e02020" fill="none" />
            </Box>
          </ToolSlot>
          <ToolSlot $height={22}>
            <Box>
              <path d="M2.5 12 L4.5 7 L6 12 L8 4 L9.5 12 L12 5 L14.5 11" stroke="#e02020" strokeWidth="1.3" fill="none" />
              <path d="M2.5 13.5 H14.5" stroke="#2040c0" />
            </Box>
          </ToolSlot>
          <ToolSlot $height={24}>
            <Percent>10%</Percent>
          </ToolSlot>
          <ToolSlot>
            <svg width="17" height="17" viewBox="0 0 17 17">
              <path d="M2 15 L3 11 L12 2 L15 5 L6 14 Z" fill="#f0b030" stroke="#6a4a10" />
              <path d="M12 2 L15 5 L14 6 L11 3 Z" fill="#e07070" />
              <path d="M2 15 L3 12.5 L4.5 14 Z" fill="#333" />
            </svg>
          </ToolSlot>
          <Divider $margin="3px 0 5px" />
          <ToolSlot>
            <Box>
              <text x="8.5" y="13" fontSize="11" fontFamily="Liberation Sans" textAnchor="middle" fill="#1a50c0">Fs</text>
            </Box>
          </ToolSlot>
          <ToolSlot>
            <ToolSvg viewBox="0 0 17 17">
              <rect x="1" y="1" width="15" height="15" fill="#fff" stroke={BLUE} />
              <path d="M3 8 A5 5 0 0 1 12 5 L13.5 3.5 V8 H9 L11 6 A3.5 3.5 0 0 0 5 8 Z M14 9 A5 5 0 0 1 5 12 L3.5 13.5 V9 H8 L6 11 A3.5 3.5 0 0 0 12 9 Z" fill="#48b848" />
            </ToolSvg>
          </ToolSlot>
          {["1", "5", "15", "30", "60", "日", "周", "月"].map((t) => (
            <ToolSlot key={t} $size={/\d/.test(t) ? 13 : 14} $height={t === "周" ? 22 : 23}>{t}</ToolSlot>
          ))}
        </Tools>
      </Body>

      <StatusBar>
        <Index $width={25}>上证</Index>
        <Green $width={53}>3230.03</Green>
        <Green $width={45}>-16.90</Green>
        <Green $width={47}>-0.52%</Green>
        <Index $width={45}>2230亿</Index>
        <Index $width={25}>沪深</Index>
        <Green $width={53}>3435.10</Green>
        <Green $width={45}>-23.34</Green>
        <Green $width={47}>-0.67%</Green>
        <Index $width={45}>978.8亿</Index>
        <Index $width={24}>创业</Index>
        <Green $width={54}>1920.40</Green>
        <Green $width={45}>-11.57</Green>
        <Green $width={47}>-0.60%</Green>
        <Index $width={44}>704.0亿</Index>
        <Mini>
          <MiniGroup>
            <MiniTrack>
              <MiniPart color="#ff0000" style={{ width: "12px" }} />
              <MiniPart color="#008000" style={{ width: "12px" }} />
            </MiniTrack>
            <MiniDash />
          </MiniGroup>
          <MiniGroup>
            <MiniTrack>
              <MiniPart color="#ff0000" style={{ width: "7px" }} />
              <MiniPart color="#008000" style={{ width: "7px" }} />
            </MiniTrack>
            <MiniDash />
          </MiniGroup>
        </Mini>
        <Station>南京行情主站</Station>
      </StatusBar>

      <Cursor viewBox="0 0 13 19">
        <path d="M1 1 V15 L4.5 12 L7 18 L9.5 17 L7 11 L11.5 11 Z" fill="#fff" stroke="#000" />
      </Cursor>
      <Ime>
        <ImeZh>中</ImeZh>
        <svg width="14" height="15" viewBox="0 0 14 15" fill="#1a74d2">
          <path d="M9 0 C10 6 7 10 1 12 C8 15 14 11 13 6 C13 3 11 1 9 0 Z" />
        </svg>
        <ImeMark>°,</ImeMark>
        <Mic size={15} strokeWidth={2.4} />
        <Keyboard size={17} strokeWidth={2.2} />
        <User size={17} strokeWidth={2.6} />
        <Shirt size={14} fill="#1a74d2" />
        <Wrench size={16} fill="#1a74d2" />
      </Ime>
      <ImeLogo>S</ImeLogo>
      <Watermark>178448.COM</Watermark>
    </Page>
  );
}
